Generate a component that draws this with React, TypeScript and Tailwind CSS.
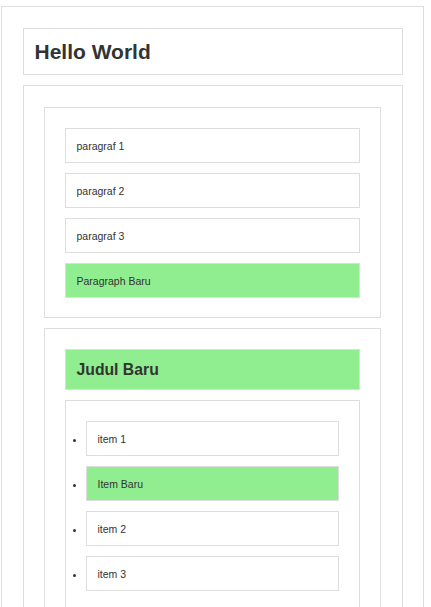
const font = { fontFamily: '"Liberation Sans", Arial, sans-serif' }

function Para({ text, green }: { text: string; green?: boolean }) {
  return (
    <div
      className={`border border-[#dddddd] px-[10.5px] py-[10.5px] text-[10.5px] leading-[12px] text-[#333333] ${green ? 'bg-[#90ee90]' : 'bg-white'}`}
    >
      {text}
    </div>
  )
}

function Item({ text, green }: { text: string; green?: boolean }) {
  return (
    <li
      className={`list-disc border border-[#dddddd] px-[10.5px] py-[10.5px] text-[10.5px] leading-[12px] text-[#333333] ${green ? 'bg-[#90ee90]' : 'bg-white'}`}
    >
      {text}
    </li>
  )
}

export default function App() {
  return (
    <div className="min-h-screen bg-white pt-[6px]" style={font}>
      <div className="ml-px w-[423px] border border-[#dddddd] pt-[21px] pl-[21px] pr-[20px] pb-[21px] flex flex-col gap-[10px]">
        <div className="border border-[#dddddd] px-[10.5px] py-[10.5px]">
          <h1 className="text-[21px] leading-[24px] font-bold text-[#333333]">Hello World</h1>
        </div>

        <div className="border border-[#dddddd] pt-[21px] pb-[20px] pl-[20px] pr-[21px] flex flex-col gap-[10px]">
          {/* paragraphs */}
          <div className="border border-[#dddddd] pt-[20px] pb-[19px] px-[20px] flex flex-col gap-[10px]">
            <Para text="paragraf 1" />
            <Para text="paragraf 2" />
            <Para text="paragraf 3" />
            <Para text="Paragraph Baru" green />
          </div>

          {/* list section */}
          <div className="border border-[#dddddd] p-[20px] flex flex-col gap-[10px]">
            <div className="border border-[#dddddd] bg-[#90ee90] px-[10.5px] py-[10.5px]">
              <h2 className="text-[15.75px] leading-[18px] font-bold text-[#333333]">Judul Baru</h2>
            </div>
            <ul className="border border-[#dddddd] p-[20px] flex flex-col gap-[10px]">
              <Item text="item 1" />
              <Item text="Item Baru" green />
              <Item text="item 2" />
              <Item text="item 3" />
            </ul>
          </div>
        </div>
      </div>
    </div>
  )
}
